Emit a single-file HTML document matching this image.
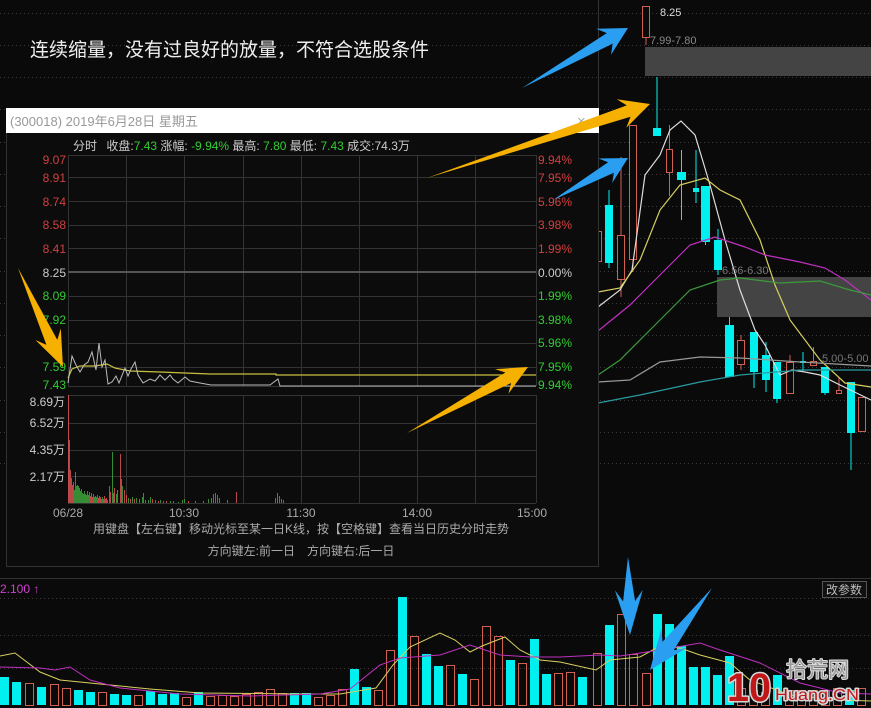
<!DOCTYPE html>
<html><head><meta charset="utf-8">
<style>
html,body{margin:0;padding:0;background:#0a0a0a;width:871px;height:708px;overflow:hidden}
svg{display:block}
text{font-family:"Liberation Sans","Noto Sans CJK SC",sans-serif}
.wm{paint-order:stroke;stroke:#d8d8d8;stroke-width:3px;stroke-linejoin:round}
</style></head><body>
<svg id="s" width="871" height="708" viewBox="0 0 871 708" xmlns="http://www.w3.org/2000/svg">
<rect width="871" height="708" fill="#0a0a0a"/>
<g id="dots" stroke="#3a3a3a" stroke-dasharray="1,3" stroke-width="1"></g>
<rect x="645" y="47" width="226" height="29" fill="#444"/>
<rect x="717" y="277" width="154" height="40" fill="#444"/>
<line x1="598.5" y1="0" x2="598.5" y2="470" stroke="#333"/>
<g id="cand"></g>
<g fill="none" stroke-width="1.2">
<polyline stroke="#ddd" points="598,307 620,290 632,270 645,175 660,155 670,130 681,121 695,135 710,185 725,240 740,290 755,330 765,345 780,375 792,370 805,372 820,375 840,385 871,400"/>
<polyline stroke="#d8d060" points="598,292 620,288 640,260 660,210 680,185 705,178 720,190 740,200 760,240 775,285 790,320 820,360 845,383 871,387"/>
<polyline stroke="#c030c0" points="598,331 630,305 660,275 690,245 715,237 745,247 765,255 800,262 825,268 845,280 871,300"/>
<polyline stroke="#3a9a3a" points="598,375 620,360 650,330 690,290 720,280 740,278 780,283 820,281 850,290 871,295"/>
<polyline stroke="#999" points="598,382 630,380 660,362 700,357 740,358 800,362 871,366"/>
<polyline stroke="#2a9aa0" points="598,403 640,395 700,382 740,375 800,370 871,370"/>
</g>
<text x="660" y="16" fill="#ddd" font-size="11" font-family="Liberation Mono">8.25</text>
<text x="650" y="44" fill="#888" font-size="11" font-family="Liberation Mono">7.99-7.80</text>
<text x="722" y="274" fill="#777" font-size="11" font-family="Liberation Mono">6.56-6.30</text>
<text x="822" y="362" fill="#777" font-size="11" font-family="Liberation Mono">5.00-5.00</text>

<text x="30" y="56" fill="#eee" font-size="19">连续缩量，没有过良好的放量，不符合选股条件</text>

<rect x="6.5" y="108.5" width="592" height="458" fill="#0c0c0c" stroke="#333"/>
<rect x="6" y="108" width="593" height="25" fill="#fff"/>
<text x="10" y="126" fill="#999" font-size="13">(300018) 2019年6月28日 星期五</text>
<text x="577" y="126" fill="#aaa" font-size="15">×</text>
<text x="73" y="150" font-size="12" fill="#ccc">分时 <tspan dx="6">收盘:</tspan><tspan fill="#3c3">7.43</tspan> 涨幅: <tspan fill="#3c3">-9.94%</tspan> 最高: <tspan fill="#3c3">7.80</tspan> 最低: <tspan fill="#3c3">7.43</tspan> 成交:74.3万</text>
<g id="grid" stroke="#333" stroke-width="1"></g>
<line x1="68" y1="272" x2="536" y2="272" stroke="#555" stroke-width="2"/>
<g font-size="12" text-anchor="end">
<text x="66" y="164" fill="#d04040">9.07</text><text x="66" y="182" fill="#d04040">8.91</text>
<text x="66" y="206" fill="#d04040">8.74</text><text x="66" y="229" fill="#d04040">8.58</text>
<text x="66" y="253" fill="#d04040">8.41</text><text x="66" y="277" fill="#ccc">8.25</text>
<text x="66" y="300" fill="#3c3">8.09</text><text x="66" y="324" fill="#3c3">7.92</text>
<text x="66" y="371" fill="#3c3">7.59</text><text x="66" y="389" fill="#3c3">7.43</text>
<text x="65" y="406" fill="#ccc">8.69万</text><text x="65" y="427" fill="#ccc">6.52万</text>
<text x="65" y="454" fill="#ccc">4.35万</text><text x="65" y="481" fill="#ccc">2.17万</text>
</g>
<g font-size="12">
<text x="538" y="164" fill="#d04040">9.94%</text><text x="538" y="182" fill="#d04040">7.95%</text>
<text x="538" y="206" fill="#d04040">5.96%</text><text x="538" y="229" fill="#d04040">3.98%</text>
<text x="538" y="253" fill="#d04040">1.99%</text><text x="538" y="277" fill="#ccc">0.00%</text>
<text x="538" y="300" fill="#3c3">1.99%</text><text x="538" y="324" fill="#3c3">3.98%</text>
<text x="538" y="347" fill="#3c3">5.96%</text><text x="538" y="371" fill="#3c3">7.95%</text>
<text x="538" y="389" fill="#3c3">9.94%</text>
</g>
<polyline fill="none" stroke="#c8c040" stroke-width="1.2" points="68,378 72,369 80,366 95,366 107,364 115,368 130,371 160,372 210,374 276,374 276,375 536,375"/>
<polyline fill="none" stroke="#bbb" stroke-width="1" points="68,383 72,356 76,365 80,372 84,365 88,362 92,352 96,370 99,343 102,367 105,360 108,384 112,382 116,376 119,383 125,368 128,376 131,369 135,362 138,375 143,383 150,379 155,381 160,375 165,380 170,375 173,379 178,383 185,377 190,381 200,383 211,385 270,385 278,379 280,386 536,386"/>
<g id="vol"></g>
<g font-size="12" fill="#aaa" text-anchor="middle">
<text x="68" y="517">06/28</text><text x="184" y="517">10:30</text><text x="301" y="517">11:30</text>
<text x="417" y="517">14:00</text><text x="532" y="517">15:00</text>
<text x="301" y="533">用键盘【左右键】移动光标至某一日K线，按【空格键】查看当日历史分时走势</text>
<text x="301" y="555">方向键左:前一日　方向键右:后一日</text>
</g>

<line x1="0" y1="578.5" x2="871" y2="578.5" stroke="#333"/>
<text x="0" y="593" fill="#d040d0" font-size="12">2.100 ↑</text>
<rect x="822.5" y="581.5" width="44" height="16" fill="#111" stroke="#555"/>
<text x="844" y="594" fill="#bbb" font-size="12" text-anchor="middle">改参数</text>
<g id="bvol"></g>
<g fill="none" stroke-width="1">
<polyline stroke="#d8d060" points="0,656 15,653 40,672 60,680 100,684 150,689 200,693 300,694 340,694 376,688 393,665 410,647 440,633 455,640 470,652 482,646 505,637 520,650 540,660 560,662 596,670 610,660 640,657 660,646 680,648 700,655 730,663 750,680 790,695 840,700 871,701"/>
<polyline stroke="#c030c0" points="0,667 40,668 55,670 70,667 90,680 120,688 180,694 250,696 320,694 350,689 380,665 400,658 440,655 470,645 500,655 530,657 560,657 600,655 620,656 660,650 700,643 720,650 760,663 800,683 840,693 871,694"/>
</g>
<g id="arr"></g>
<text class="wm" x="727" y="701" fill="#c01818" font-size="40" font-weight="bold" textLength="44" lengthAdjust="spacingAndGlyphs">10</text>
<text class="wm" x="786" y="677" fill="#999" font-size="21" style="stroke:#ddd;stroke-width:2px">拾荒网</text>
<text class="wm" x="775" y="700" fill="#c01818" font-size="16" textLength="84" lengthAdjust="spacingAndGlyphs">Huang.CN</text>
</svg>
<script>
var NS="http://www.w3.org/2000/svg";
function el(p,t,a){var e=document.createElementNS(NS,t);for(var k in a)e.setAttribute(k,a[k]);document.getElementById(p).appendChild(e);return e;}
[13,45,77,109,142,174,206,238,271,303,335,367,400,432,463].forEach(function(y){el("dots","line",{x1:0,y1:y+.5,x2:871,y2:y+.5});});
[598,635,668].forEach(function(y){el("dots","line",{x1:0,y1:y+.5,x2:871,y2:y+.5});});
[68,126,184,243,301,359,417,475,536].forEach(function(x){el("grid","line",{x1:x+.5,y1:155,x2:x+.5,y2:386});el("grid","line",{x1:x+.5,y1:395,x2:x+.5,y2:503});});
[155,177,201,225,248,296,320,343,367,386].forEach(function(y){el("grid","line",{x1:68,y1:y+.5,x2:536,y2:y+.5});});
[395,423,450,476,503].forEach(function(y){el("grid","line",{x1:68,y1:y+.5,x2:536,y2:y+.5});});
var V=[[68,395,"r"],[69,440,"g"],[70,470,"r"],[71,478,"g"],[72,485,"r"],[73,482,"g"],[74,490,"g"],[75,472,"g"],[76,486,"g"],[77,485,"g"],[78,486,"g"],[79,488,"g"],[80,491,"g"],[81,489,"g"],[82,493,"g"],[83,494,"r"],[84,491,"g"],[85,494,"r"],[86,495,"g"],[87,491,"r"],[88,495,"g"],[89,492,"g"],[90,496,"r"],[91,493,"g"],[92,497,"r"],[93,494,"r"],[94,497,"g"],[95,496,"r"],[96,497,"g"],[97,495,"g"],[98,498,"r"],[99,496,"g"],[100,497,"r"],[101,499,"g"],[102,497,"g"],[103,499,"r"],[104,496,"r"],[105,499,"g"],[106,498,"r"],[107,500,"g"],[109,486,"g"],[110,492,"r"],[112,452,"g"],[113,493,"r"],[114,488,"r"],[116,494,"g"],[117,490,"r"],[120,454,"r"],[121,479,"r"],[122,486,"g"],[124,490,"r"],[126,495,"r"],[128,498,"g"],[130,499,"r"],[132,497,"g"],[134,499,"r"],[136,498,"g"],[139,499,"r"],[142,497,"g"],[143,493,"g"],[145,500,"r"],[148,500,"g"],[150,497,"g"],[152,499,"r"],[155,500,"g"],[158,501,"r"],[160,500,"g"],[163,501,"g"],[166,501,"r"],[170,501,"g"],[173,501,"r"],[178,502,"g"],[182,500,"g"],[184,499,"g"],[188,501,"r"],[195,501,"g"],[203,501,"r"],[208,499,"g"],[211,498,"r"],[213,494,"r"],[215,493,"r"],[217,495,"r"],[219,498,"g"],[227,500,"r"],[236,492,"r"],[275,498,"r"],[277,493,"r"],[279,496,"r"],[281,499,"g"],[283,500,"g"]];
V.forEach(function(v){el("vol","rect",{x:v[0],y:v[1],width:0.9,height:503-v[1],fill:v[2]=="r"?"#d05050":"#3a9a3a"});});
var C=[[598,4,231,262,231,262,"r"],[605,8,205,263,190,268,"c"],[617,8,235,280,157,297,"r"],[629,8,125,260,125,272,"r"],[642,8,6,38,6,45,"r"],[653,8,128,136,77,136,"c"],[666,7,149,173,125,196,"r"],[677,9,172,180,150,220,"c"],[693,6,188,192,150,203,"c"],[701,9,186,242,186,245,"c"],[714,8,240,270,229,275,"c"],[725,9,325,377,317,377,"c"],[737,8,340,365,335,370,"r"],[750,8,332,372,332,388,"c"],[762,8,355,380,342,392,"c"],[773,8,362,399,362,403,"c"],[786,8,362,394,355,394,"r"],[800,6,361,363,352,372,"c"],[810,7,361,366,347,366,"r"],[821,8,367,393,367,395,"c"],[836,6,390,394,377,394,"r"],[847,8,382,433,382,470,"c"],[858,8,397,432,397,432,"r"]];
C.forEach(function(c){var col=c[6]=="r"?"#d06050":"#00f0f0";var cx=c[0]+c[1]/2;el("cand","line",{x1:cx,y1:c[4],x2:cx,y2:c[5],stroke:col});
if(c[6]=="r")el("cand","rect",{x:c[0]+.5,y:c[2]+.5,width:c[1]-1,height:c[3]-c[2]-1,fill:"#0a0a0a",stroke:col});else el("cand","rect",{x:c[0],y:c[2],width:c[1],height:c[3]-c[2],fill:col});});
var B=[[0,677,"c"],[12,682,"c"],[25,683,"r"],[37,687,"c"],[50,684,"r"],[62,688,"r"],[74,690,"c"],[86,692,"c"],[98,692,"r"],[110,694,"c"],[122,695,"c"],[134,695,"r"],[146,691,"c"],[158,694,"c"],[170,693,"c"],[182,697,"r"],[194,692,"c"],[206,696,"r"],[218,695,"r"],[230,696,"r"],[242,694,"r"],[254,692,"r"],[266,689,"r"],[278,693,"r"],[290,693,"c"],[302,693,"c"],[314,697,"r"],[326,695,"r"],[338,689,"r"],[350,669,"c"],[362,687,"c"],[374,690,"r"],[386,650,"r"],[398,597,"c"],[410,636,"r"],[422,654,"c"],[434,666,"c"],[446,665,"r"],[458,674,"c"],[470,679,"r"],[482,626,"r"],[494,636,"r"],[506,660,"c"],[518,663,"r"],[530,639,"c"],[542,674,"c"],[554,673,"r"],[566,672,"r"],[578,677,"c"],[593,653,"r"],[605,625,"c"],[617,614,"r"],[629,654,"r"],[642,673,"r"],[653,614,"c"],[665,624,"c"],[677,646,"c"],[689,667,"c"],[701,667,"c"],[713,675,"c"],[725,656,"c"],[737,688,"r"],[749,690,"r"],[761,692,"r"],[773,675,"c"],[785,690,"r"],[797,690,"r"],[809,690,"r"],[821,690,"r"],[833,688,"r"],[845,690,"c"],[857,688,"r"]];
B.forEach(function(b){if(b[2]=="c")el("bvol","rect",{x:b[0],y:b[1],width:9,height:705-b[1],fill:"#00f0f0"});else el("bvol","rect",{x:b[0]+.5,y:b[1]+.5,width:8,height:705-b[1],fill:"none",stroke:"#d06050"});});
function arrow(tx,ty,px,py,hl,hw,sw,col){var dx=px-tx,dy=py-ty,L=Math.sqrt(dx*dx+dy*dy),ux=dx/L,uy=dy/L,nx=-uy,ny=ux;var bx=px-ux*hl,by=py-uy*hl;var bx2=px-ux*hl*0.75,by2=py-uy*hl*0.75;
var pts=[[tx,ty],[bx2+nx*sw,by2+ny*sw],[bx+nx*hw,by+ny*hw],[px,py],[bx-nx*hw,by-ny*hw],[bx2-nx*sw,by2-ny*sw]];
el("arr","polygon",{points:pts.map(function(p){return p[0].toFixed(1)+","+p[1].toFixed(1)}).join(" "),fill:col});}
var O="#f5b000",Bl="#2a9ef0";
arrow(522,88,628,28,28,15,6,Bl);
arrow(427,178,650,104,30,15,6,O);
arrow(553,200,628,158,26,14,6,Bl);
arrow(18,268,63,367,36,14,6,O);
arrow(407,433,528,367,30,14,6,O);
arrow(628,557,630,635,45,14,6,Bl);
arrow(712,588,650,670,40,16,7,Bl);
</script>
</body></html>
